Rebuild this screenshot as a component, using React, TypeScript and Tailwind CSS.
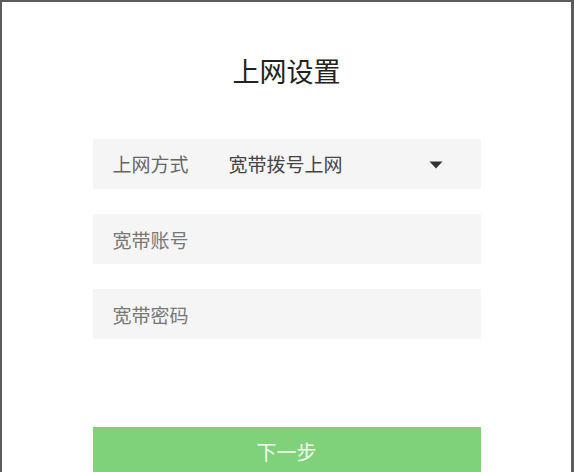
import React, { useState } from 'react';

const font = { fontFamily: '"Noto Sans CJK SC", "Noto Sans", sans-serif' };

export default function App() {
  const [account, setAccount] = useState('');
  const [password, setPassword] = useState('');

  return (
    <div
      className="h-[472px] w-[574px] overflow-hidden bg-white border-l-2 border-t-2 border-r-[3px] border-[#5c5c5c]"
      style={font}
    >
      {/* Title */}
      <h1 className="mt-[51px] h-[36px] text-center text-[27px] leading-[36px] text-[#222]">上网设置</h1>

      <div className="mx-auto mt-[50px] flex w-[388px] flex-col gap-[25px]">
        {/* Connection type select */}
        <div className="flex h-[50px] items-center bg-[#f5f5f5] pl-[20px] pr-[38px] text-[19px]">
          <span className="w-[116px] text-[#666]">上网方式</span>
          <span className="flex-1 text-[#444]">宽带拨号上网</span>
          <svg width="14" height="8" viewBox="0 0 14 8" className="mt-[1px]">
            <path d="M0.5 0.5 H13.5 L7 7.5 Z" fill="#333" />
          </svg>
        </div>

        <input
          value={account}
          onChange={(e) => setAccount(e.target.value)}
          placeholder="宽带账号"
          className="h-[50px] bg-[#f5f5f5] px-[20px] text-[19px] text-[#444] outline-none placeholder:text-[#777]"
        />
        <input
          type="password"
          value={password}
          onChange={(e) => setPassword(e.target.value)}
          placeholder="宽带密码"
          className="h-[50px] bg-[#f5f5f5] px-[20px] text-[19px] text-[#444] outline-none placeholder:text-[#777]"
        />

        <button className="mt-[63px] h-[50px] bg-[#7fd17a] text-[20px] text-[#f4fff2]">下一步</button>
      </div>
    </div>
  );
}
